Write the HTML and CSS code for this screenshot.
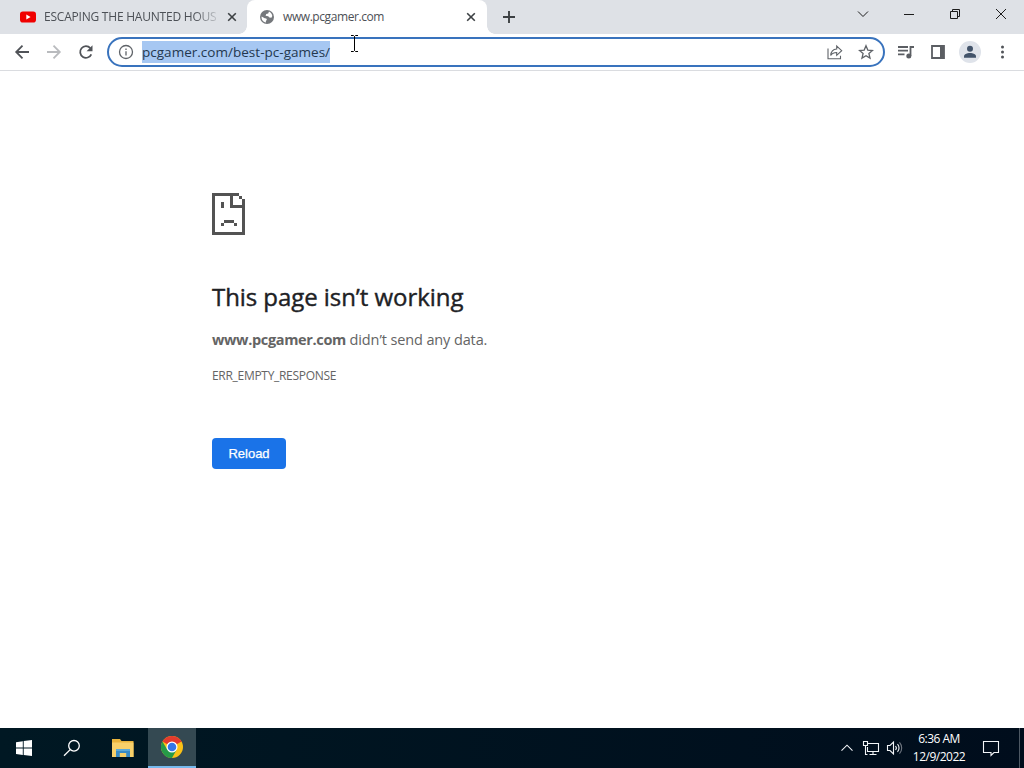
FILE: index.html
```html
<!DOCTYPE html>
<html lang="en">
<head>
    <meta charset="UTF-8">
    <meta name="viewport" content="width=device-width, initial-scale=1.0">
    <title>www.pcgamer.com</title>
    <link rel="stylesheet" href="styles.css">
</head>
<body>
    <div class="tab-strip">
        <div class="tab">
            <svg class="favicon" width="16" height="16" viewBox="0 0 16 16">
                <rect x="0" y="2.5" width="16" height="11" rx="2.8" fill="#f00000"/>
                <path d="M6.3 5.6v4.8L10.6 8z" fill="#fff"/>
            </svg>
            <span class="tab-title faded">ESCAPING THE HAUNTED HOUS</span>
            <svg class="tab-close" width="16" height="16" viewBox="0 0 16 16"><path d="M4.2 4.2l7.6 7.6M11.8 4.2l-7.6 7.6"/></svg>
        </div>
        <div class="tab active">
            <svg class="favicon" width="16" height="16" viewBox="0 0 16 16">
                <circle cx="8" cy="8" r="7" fill="#75787c"/>
                <path d="M2.6 7.4l3.1 1.8 1.6.2.6 1.3-1 1.2v1.5C4.2 12.8 2.2 10.6 2.6 7.4zM6.6 6.7L7.2 5l2-.5.8-1.9c1.7.8 3 2.3 3.3 4.4l-.9 1.7-2-.2-1.2-1.3z" fill="#fff"/>
            </svg>
            <span class="tab-title">www.pcgamer.com</span>
            <svg class="tab-close" width="16" height="16" viewBox="0 0 16 16"><path d="M4.2 4.2l7.6 7.6M11.8 4.2l-7.6 7.6"/></svg>
        </div>
        <svg class="new-tab" width="16" height="16" viewBox="0 0 16 16"><path d="M8 2v12M2 8h12"/></svg>
        <div class="window-controls">
            <span><svg width="12" height="12" viewBox="0 0 12 12"><path d="M1 3.5l5 5 5-5"/></svg></span>
            <span><svg width="12" height="12" viewBox="0 0 12 12"><path d="M1 6.5h10"/></svg></span>
            <span><svg width="12" height="12" viewBox="0 0 12 12"><path d="M1.5 3.5h7v7h-7zM3.5 3.5v-2h7v7h-2"/></svg></span>
            <span><svg width="12" height="12" viewBox="0 0 12 12"><path d="M1 1l10 10M11 1L1 11"/></svg></span>
        </div>
    </div>

    <div class="toolbar">
        <div class="nav-buttons">
            <svg width="16" height="16" viewBox="0 0 16 16"><path d="M15 8H2.5M8.5 1.7L2.2 8l6.3 6.3"/></svg>
            <svg class="disabled" width="16" height="16" viewBox="0 0 16 16"><path d="M1 8h12.5M7.5 1.7L13.8 8l-6.3 6.3"/></svg>
            <svg width="16" height="16" viewBox="0 0 16 16">
                <path d="M13.3 10.3A5.8 5.8 0 1 1 12.3 4.1"/>
                <path d="M14.5 1.2v6H8.6z" class="solid"/>
            </svg>
        </div>
        <div class="omnibox">
            <svg class="info" width="16" height="16" viewBox="0 0 16 16">
                <circle cx="8" cy="8" r="6.5"/>
                <path d="M8 7.2v4.3M8 4.4v1.7"/>
            </svg>
            <span class="url">pcgamer.com/best-pc-games/</span>
            <svg class="share" width="18" height="18" viewBox="0 0 18 18">
                <path d="M2 5.5v10.300h12.500v-3M4.700 12.500c.3-4.300 2.500-6.300 6-6.500V3l5 4.700-5 4.600V9.500c-2.700 0-4.600.8-6 3z"/>
            </svg>
            <svg class="star" width="16" height="16" viewBox="0 0 16 16">
                <path d="M8 1.800l1.800 4.300 4.700.4-3.600 3 1.100 4.600L8 11.700l-4 2.400 1.100-4.600-3.600-3 4.700-.4z"/>
            </svg>
        </div>
        <div class="toolbar-icons">
            <svg width="18" height="18" viewBox="0 0 18 18">
                <path d="M1 4h10M1 7.700h10M1 11.400h6.500M13.500 13V4H17"/>
                <circle cx="11.800" cy="13" r="2.500" class="solid"/>
            </svg>
            <svg width="18" height="18" viewBox="0 0 18 18">
                <path d="M3 3h12v12H3z"/>
                <path d="M11 3h4v12h-4z" class="solid"/>
            </svg>
            <svg width="24" height="24" viewBox="0 0 24 24">
                <circle cx="12" cy="12" r="11" fill="#dfe3ea" stroke="none"/>
                <circle cx="12" cy="8.800" r="3" fill="#42536a" stroke="none"/>
                <path d="M6 17.800v-1.500c0-2 3-3.300 6-3.300s6 1.300 6 3.300v1.500z" fill="#42536a" stroke="none"/>
            </svg>
            <svg width="18" height="18" viewBox="0 0 18 18">
                <circle cx="9.5" cy="4" r="1.5" class="dot"/>
                <circle cx="9.5" cy="9" r="1.5" class="dot"/>
                <circle cx="9.5" cy="14" r="1.5" class="dot"/>
            </svg>
        </div>
        <svg class="text-cursor" width="9" height="17" viewBox="0 0 9 17"><path d="M1 .5h2.500l1 1 1-1H8M4.500 1.500v14M1 16.500h2.500l1-1 1 1H8"/></svg>
    </div>

    <main class="error-page">
        <svg class="sad-page" width="33" height="42" viewBox="0 0 33 42">
            <path d="M0 0h27v3H3v36h27V6h3v36H0zM27 3h3v3h-3zM18 3h3v9h9v3H18zM9 9h3v6H9zM12 27h10v3H12zM9 30h3v3H9zM22 30h3v3h-3z"/>
        </svg>
        <h1>This page isn’t working</h1>
        <p class="message"><strong>www.pcgamer.com</strong> <span>didn’t send any data.</span></p>
        <div class="error-code">ERR_EMPTY_RESPONSE</div>
        <button class="reload">Reload</button>
    </main>

    <footer class="taskbar">
        <div class="task">
            <svg width="16" height="16" viewBox="0 0 16 16"><path d="M0 2.200L6.800 1.200v6.400H0zM7.700 1.100L16 0v7.600H7.700zM0 8.500h6.800v6.400L0 13.900zM7.700 8.500H16V16l-8.300-1.100z" fill="#fff"/></svg>
        </div>
        <div class="task">
            <svg width="18" height="18" viewBox="0 0 18 18"><g fill="none" stroke="#fff" stroke-width="1.3"><circle cx="11" cy="6.800" r="5.300"/><path d="M7.200 10.600L1 16.800"/></g></svg>
        </div>
        <div class="task explorer">
            <svg width="22" height="18" viewBox="0 0 22 18">
                <path d="M0 0h8l1.500 2H21.500v16H0z" fill="#e9b33c"/>
                <path d="M0 3.500h21.500V18H0z" fill="#f8d06a"/>
                <path d="M4 10h14v8h-3.800v-4H7.800v4H4z" fill="#398bc6"/>
                <path d="M4 10h14v2H4z" fill="#5ba9d9"/>
            </svg>
        </div>
        <div class="task running">
            <svg width="22" height="22" viewBox="0 0 22 22">
                <circle cx="11" cy="11" r="11" fill="#fbc116"/>
                <path d="M11 11L1.470 5.500A11 11 0 0 1 20.530 5.500z" fill="#e33b2e"/>
                <path d="M1.470 5.500A11 11 0 0 0 11 22l4.600-8.300L11 11 6.300 13.700z" fill="#269a48"/>
                <path d="M11 6h9.800a11 11 0 0 0-.3-.5L11 3z" fill="#e33b2e"/>
                <circle cx="11" cy="11" r="5.500" fill="#fff"/>
                <circle cx="11" cy="11" r="4.300" fill="#3476e8"/>
            </svg>
        </div>
        <div class="tray">
            <svg width="14" height="16" viewBox="0 0 14 16"><path d="M1.500 10.700L7 5.200l5.500 5.500"/></svg>
            <svg width="18" height="16" viewBox="0 0 18 16"><path d="M6 3.500h10.500v8H5.500V7M11 11.500v3M7.500 14.500h7M1.500 1.500h4v4h-4zM3.500 5.500v9h2"/></svg>
            <svg width="17" height="16" viewBox="0 0 17 16">
                <path d="M1.500 5.500h2.500l3.500-3.500v12L4 10.500H1.500zM9.500 6a3 3 0 0 1 0 4M11.500 4.200a5.500 5.500 0 0 1 0 7.600"/>
                <path d="M13.500 2.300a8.500 8.500 0 0 1 0 11.400" class="dim"/>
            </svg>
            <div class="clock"><div class="time">6:36 AM</div><div class="date">12/9/2022</div></div>
            <svg class="notifications" width="18" height="18" viewBox="0 0 18 18"><path d="M1.500 2.500h15v11h-4.500l-3 3v-3H1.500z"/></svg>
            <div class="show-desktop"></div>
        </div>
    </footer>
</body>
</html>
```
FILE: styles.css
```css
* {
    box-sizing: border-box;
    margin: 0;
    padding: 0;
}

body {
    font-family: "Open Sans", "Noto Sans", sans-serif;
    width: 1024px;
    height: 768px;
    display: flex;
    flex-direction: column;
    overflow: hidden;
    background: #fff;
}

svg {
    display: block;
    flex-shrink: 0;
}

.tab-strip {
    height: 34px;
    display: flex;
    background: #dee1e6;
}

.tab {
    width: 247px;
    display: flex;
    align-items: center;
    padding: 0 7px 0 20px;
    font-size: 12px;
    color: #4c5056;
}

.tab.active {
    width: 240px;
    padding: 0 8px 0 12px;
    border-radius: 8px 8px 0 0;
    background: #fff;
    position: relative;
}

/* curved feet on both sides of the active tab */
.tab.active::before,
.tab.active::after {
    content: "";
    position: absolute;
    bottom: 0;
    width: 8px;
    height: 8px;
}

.tab.active::before {
    left: -8px;
    background: radial-gradient(circle at 0 0, transparent 7.5px, #fff 8px);
}

.tab.active::after {
    right: -8px;
    background: radial-gradient(circle at 100% 0, transparent 7.5px, #fff 8px);
}

.tab-title {
    flex: 1;
    margin: 0 8px;
    padding-bottom: 2px;
    white-space: nowrap;
    letter-spacing: -0.42px;
}

.faded {
    margin-right: 6px;
    letter-spacing: -0.22px;
    -webkit-mask-image: linear-gradient(to right, #000 86%, rgba(0, 0, 0, 0.15));
    mask-image: linear-gradient(to right, #000 86%, rgba(0, 0, 0, 0.15));
}

.tab-close {
    fill: none;
    stroke: #3c4043;
    stroke-width: 1.6;
}

.new-tab {
    margin: 9px 0 0 14px;
    fill: none;
    stroke: #3c4043;
    stroke-width: 1.9;
}

.window-controls {
    display: flex;
    height: 28px;
    margin-left: auto;
}

.window-controls span {
    width: 46px;
    display: flex;
    align-items: center;
    justify-content: center;
}

.window-controls svg {
    fill: none;
    stroke: #1c1c1c;
    stroke-width: 1;
}

.toolbar {
    position: relative;
    height: 37px;
    display: flex;
    align-items: center;
    padding: 0 14px;
    border-bottom: 1px solid #dadce0;
}

.nav-buttons {
    display: flex;
    gap: 16px;
    margin-right: 13px;
    fill: none;
    stroke: #505358;
    stroke-width: 1.8;
}

.nav-buttons .disabled {
    stroke: #b9bbbe;
}

.nav-buttons .solid {
    fill: #505358;
    stroke: none;
}

.omnibox {
    width: 778px;
    height: 30px;
    display: flex;
    align-items: center;
    padding: 0 9px;
    border: 2px solid #3973bd;
    border-radius: 15px;
}

.omnibox svg {
    fill: none;
    stroke: #5f6368;
    stroke-width: 1.3;
}

.url {
    height: 22px;
    margin: 0 auto 0 8px;
    line-height: 22px;
    font-size: 13.5px;
    letter-spacing: 0.02px;
    color: #24384f;
    background: #a6c7f2;
}

.omnibox .share {
    margin-right: 14px;
    stroke-width: 1.1;
}

.toolbar-icons {
    display: flex;
    align-items: center;
    margin-left: auto;
    fill: none;
    stroke: #5b5e63;
    stroke-width: 1.8;
}

.toolbar-icons svg:nth-child(2) {
    margin: 0 11px 0 14px;
}

.toolbar-icons svg:nth-child(4) {
    margin-left: 11px;
    margin-right: -1px;
}

.toolbar-icons .solid {
    fill: #5b5e63;
    stroke: none;
}

.toolbar-icons .dot {
    fill: #505358;
    stroke: none;
}

/* mouse pointer over the address bar */
.text-cursor {
    position: absolute;
    left: 350px;
    top: 1px;
    fill: none;
    stroke: #000;
}

.error-page {
    flex: 1;
    padding: 122px 0 0 212px;
    color: #646464;
}

.sad-page {
    fill: #535353;
    shape-rendering: crispEdges;
}

h1 {
    margin-top: 46px;
    font-size: 24px;
    font-weight: 500;
    line-height: 32px;
    letter-spacing: -0.06px;
    -webkit-text-stroke: 0.4px #202124;
    color: #202124;
}

.message {
    margin-top: 16px;
    font-size: 14.5px;
    line-height: 22px;
    letter-spacing: -0.12px;
}

.message strong {
    letter-spacing: -0.35px;
}

.error-code {
    margin-top: 16px;
    font-size: 12px;
    line-height: 18px;
    letter-spacing: -0.3px;
}

.reload {
    width: 74px;
    height: 31px;
    margin-top: 53px;
    border: none;
    border-radius: 4px;
    background: #1a73e8;
    color: #fff;
    font-family: "Liberation Sans", Arial, sans-serif;
    font-size: 13px;
    -webkit-text-stroke: 0.25px #fff;
}

.taskbar {
    height: 40px;
    display: flex;
    background: linear-gradient(to right, #001823, #000d1c);
}

.task {
    width: 48px;
    display: flex;
    align-items: center;
    justify-content: center;
}

.explorer {
    width: 52px;
    padding-left: 2px;
}

.running {
    background: #344952;
    border-bottom: 2px solid #76b9ed;
}

.tray {
    display: flex;
    align-items: center;
    margin-left: auto;
    fill: none;
    stroke: #f2f5f8;
    stroke-width: 1.1;
}

.tray svg:nth-child(2) {
    margin: 0 6px 0 8px;
}

.tray .dim {
    stroke: #6f7780;
}

.clock {
    width: 72px;
    color: #fff;
    font-size: 12px;
    line-height: 18px;
    text-align: center;
    letter-spacing: -0.5px;
}

.notifications {
    margin: 0 19px 0 7px;
}

.show-desktop {
    width: 5px;
    height: 40px;
    border-left: 1px solid #4d5863;
}
```
